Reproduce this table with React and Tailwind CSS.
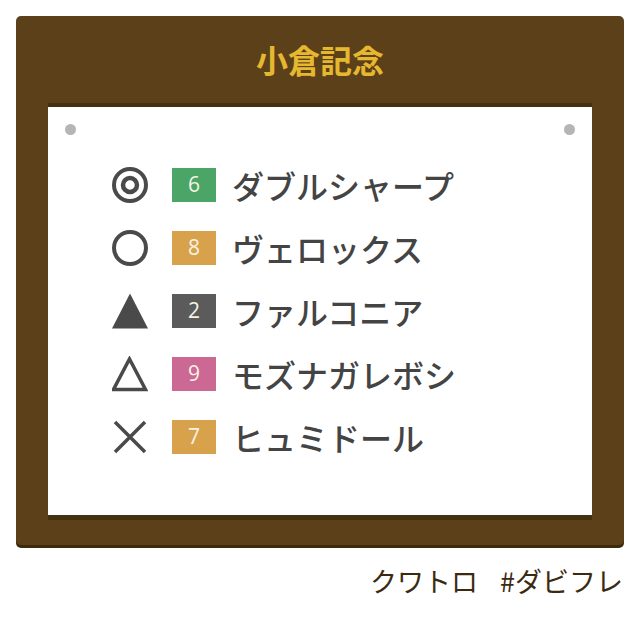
import React from "react";

const ICON = "#4a4a4a";

function Mark({ type }) {
  if (type === "double")
    return (
      <svg width="36" height="36" viewBox="0 0 36 36">
        <circle cx="18" cy="18" r="16" fill="none" stroke={ICON} strokeWidth="4" />
        <circle cx="18" cy="18" r="7" fill="none" stroke={ICON} strokeWidth="4.5" />
      </svg>
    );
  if (type === "circle")
    return (
      <svg width="36" height="36" viewBox="0 0 36 36">
        <circle cx="18" cy="18" r="16" fill="none" stroke={ICON} strokeWidth="4" />
      </svg>
    );
  if (type === "tri")
    return (
      <svg width="36" height="36" viewBox="0 0 36 36">
        <polygon points="18,0.5 36,35.5 0,35.5" fill={ICON} />
      </svg>
    );
  if (type === "otri")
    return (
      <svg width="36" height="36" viewBox="0 0 36 36">
        <polygon points="17.5,3 33.5,33.5 1.5,33.5" fill="none" stroke={ICON} strokeWidth="3.5" strokeLinejoin="miter" />
      </svg>
    );
  return (
    <svg width="36" height="36" viewBox="0 0 36 36">
      <path d="M3 3 L33 33 M33 3 L3 33" stroke={ICON} strokeWidth="3.5" fill="none" />
    </svg>
  );
}

const rows = [
  { mark: "double", num: "6", color: "bg-[#4aa566]", name: "ダブルシャープ" },
  { mark: "circle", num: "8", color: "bg-[#d8a24c]", name: "ヴェロックス" },
  { mark: "tri", num: "2", color: "bg-[#5b5b5b]", name: "ファルコニア" },
  { mark: "otri", num: "9", color: "bg-[#cc6894]", name: "モズナガレボシ" },
  { mark: "x", num: "7", color: "bg-[#d8a24c]", name: "ヒュミドール" },
];

export default function App() {
  return (
    <div
      className="w-[640px] h-[618px] bg-white px-4 pt-4"
      style={{ fontFamily: '"Noto Sans CJK JP", "Noto Sans", sans-serif' }}
    >
      <div className="bg-[#5c401a] rounded-[5px] shadow-[0_3px_0_#3e2a0b] px-8 pb-[25px]">
        <div className="h-[87px] flex items-center justify-center pb-[2px]">
          <span className="text-[32px] font-bold text-[#e6b830] leading-none">
            小倉記念
          </span>
        </div>
        <div className="relative bg-white border-t-4 border-b-[5px] border-[#45300f] h-[417px]">
          <div className="absolute left-[17px] top-[17px] w-[11px] h-[11px] rounded-full bg-[#b5b5b5]" />
          <div className="absolute right-[17px] top-[17px] w-[11px] h-[11px] rounded-full bg-[#b5b5b5]" />
          <div className="pt-[46px] pl-[64px] flex flex-col">
            {rows.map((r) => (
              <div key={r.num} className="h-[63px] flex items-center">
                <div className="w-[36px] h-[36px] flex items-center justify-center">
                  <Mark type={r.mark} />
                </div>
                <div
                  className={`ml-[24px] w-[44px] h-[34px] ${r.color} flex items-center justify-center text-[21px] font-medium text-[#f6f3e4] leading-none`}
                  style={{ fontFamily: '"Open Sans", "Noto Sans", sans-serif' }}
                >
                  {r.num}
                </div>
                <div className="ml-[16px] text-[32px] text-[#444444] leading-none font-medium">
                  {r.name}
                </div>
              </div>
            ))}
          </div>
        </div>
      </div>
      <div className="flex justify-end items-center gap-[22px] pr-[1px] pt-[22px] text-[27px] text-[#3b2a12] leading-none">
        <span>クワトロ</span>
        <span>#ダビフレ</span>
      </div>
    </div>
  );
}
